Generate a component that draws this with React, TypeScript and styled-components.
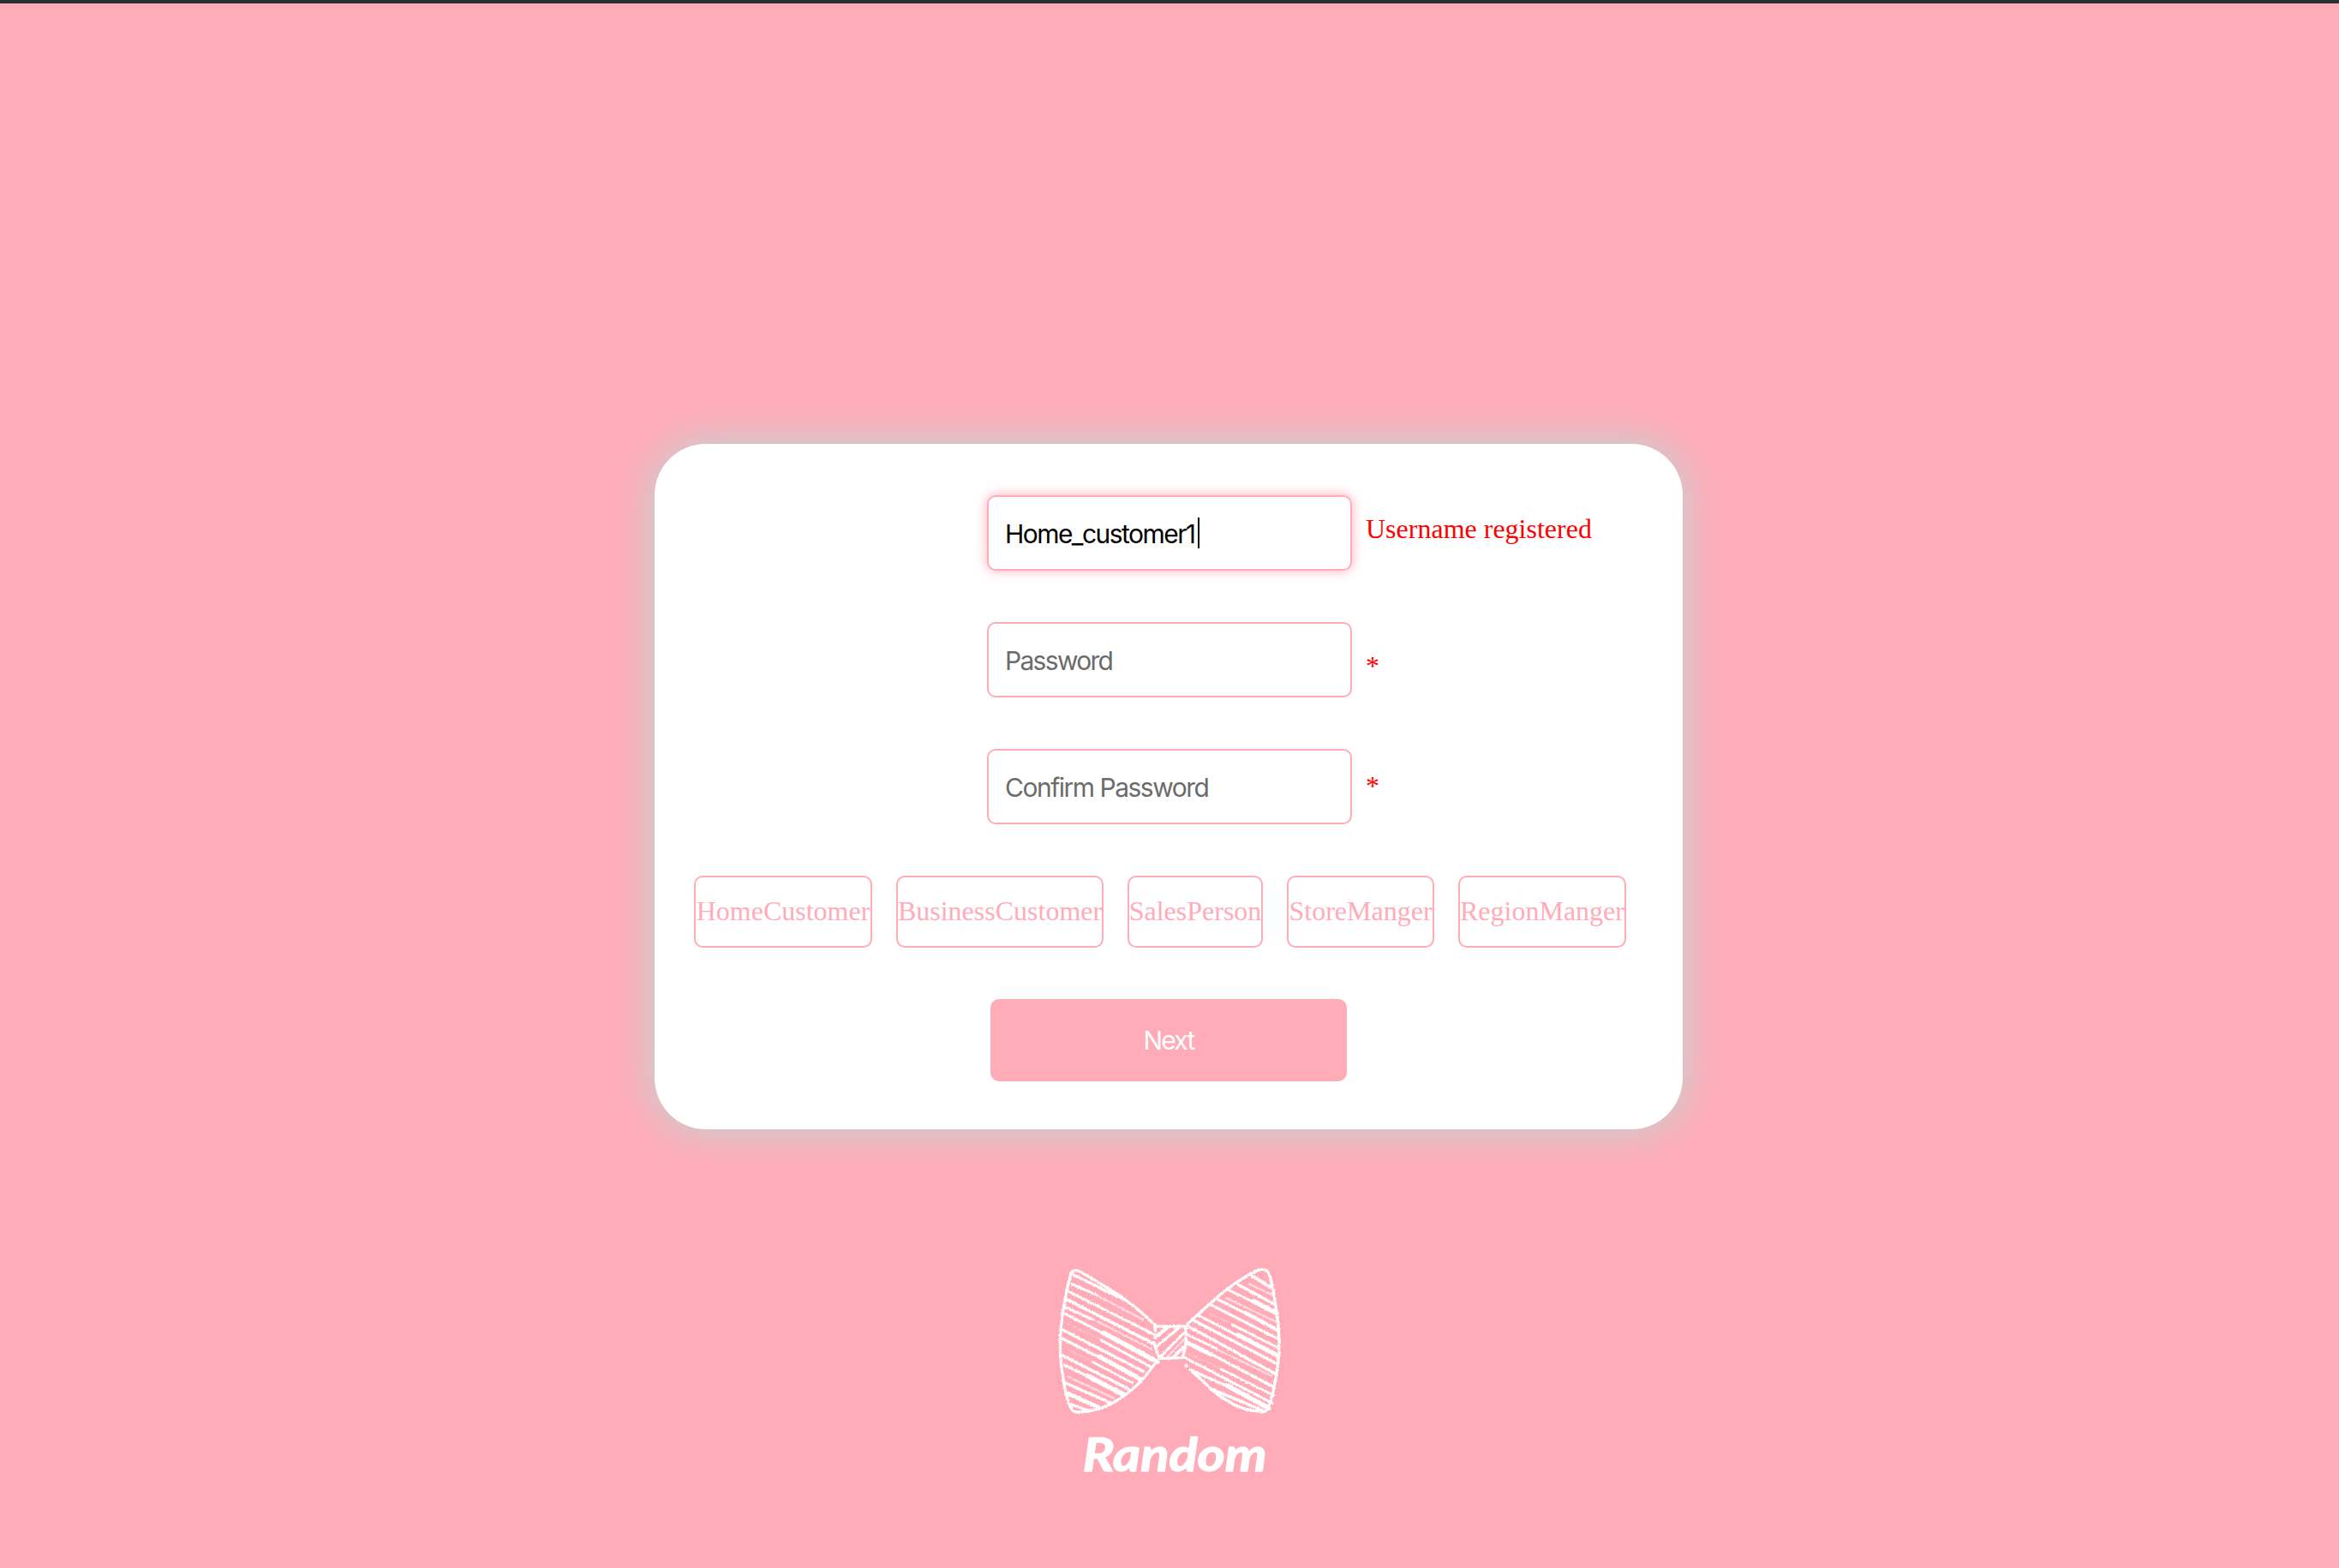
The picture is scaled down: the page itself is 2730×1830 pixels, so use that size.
import React from 'react';
import styled, { createGlobalStyle } from 'styled-components';

const PINK = '#ffacb8';
const SERIF = '"Liberation Serif", "Times New Roman", serif';
const SANS = 'Inter, "Liberation Sans", sans-serif';

const GlobalStyle = createGlobalStyle`
  * { box-sizing: border-box; }
  body { margin: 0; background: ${PINK}; overflow: hidden; }
`;

const Page = styled.div`
  height: 1830px;
  display: flex;
  flex-direction: column;
  align-items: center;
  background: ${PINK};
  font-family: ${SERIF};
  font-size: 32px;
`;

const TopEdge = styled.div`
  align-self: stretch;
  flex: none;
  height: 4px;
  background: #2b2e32;
`;

const Card = styled.form`
  width: 1200px;
  height: 800px;
  flex: none;
  margin: 514px 2px 0 0;
  padding-top: 60px;
  display: flex;
  flex-direction: column;
  gap: 60px;
  border-radius: 60px;
  background: #fff;
  box-shadow: 0 0 50px #b9d8d4;
`;

const FieldRow = styled.div`
  display: flex;
  align-items: flex-start;
  gap: 16px;
  height: 88px;
  padding-left: 388px;
`;

const Field = styled.div<{ $focused?: boolean; $spacing: number }>`
  width: 426px;
  height: 88px;
  flex: none;
  display: flex;
  align-items: center;
  padding: 2px 19px 0;
  border: 2px solid ${PINK};
  border-radius: 10px;
  font: 400 30px/36px ${SANS};
  letter-spacing: ${p => p.$spacing}px;
  color: ${p => (p.$focused ? '#000' : '#6b6b6b')};
  box-shadow: ${p => (p.$focused ? `0 0 14px ${PINK}` : 'none')};
`;

const Caret = styled.span`
  width: 2px;
  height: 36px;
  margin-left: 3px;
  margin-top: -2px;
  background: #000;
`;

const Hint = styled.span<{ $drop: number }>`
  padding-top: ${p => p.$drop}px;
  line-height: 36px;
  color: #f00;
`;

const Roles = styled.div`
  display: flex;
  gap: 28px;
  padding-left: 46px;
`;

const Role = styled.div<{ $width: number }>`
  width: ${p => p.$width}px;
  height: 84px;
  display: flex;
  align-items: center;
  justify-content: center;
  padding-bottom: 2px;
  border: 2px solid ${PINK};
  border-radius: 10px;
  color: ${PINK};
  white-space: nowrap;
`;

const Next = styled.button`
  width: 416px;
  height: 96px;
  margin-left: 392px;
  padding: 0 0 1px;
  border: 0;
  border-radius: 10px;
  background: ${PINK};
  color: #fff;
  font: 400 30px/36px ${SANS};
  letter-spacing: -1.8px;
`;

const Brand = styled.div`
  width: 320px;
  margin: 132px 0 0 -10px;
  display: flex;
`;

const roles = [
  { name: 'HomeCustomer', width: 208 },
  { name: 'BusinessCustomer', width: 242 },
  { name: 'SalesPerson', width: 158 },
  { name: 'StoreManger', width: 172 },
  { name: 'RegionManger', width: 196 },
];

// Hatching as [x1, y1, x2, y2, weight]; light weights are drawn as dry chalk.
type Stroke = [number, number, number, number, number];

const leftHatch: Stroke[] = [
  [152, 110, 345, 205, 10], [152, 145, 240, 185, 9], [240, 185, 402, 270, 5],
  [138, 170, 440, 322, 9], [132, 198, 440, 355, 11], [130, 226, 225, 270, 9],
  [225, 268, 435, 375, 5], [130, 250, 270, 322, 9], [265, 318, 452, 418, 17],
  [135, 285, 260, 342, 4], [255, 342, 430, 436, 9], [122, 307, 405, 452, 10],
  [120, 337, 255, 406, 10], [250, 400, 392, 478, 16], [138, 375, 230, 418, 4],
  [225, 418, 365, 492, 8], [122, 397, 350, 512, 10], [128, 430, 215, 472, 10],
  [210, 468, 332, 532, 17], [138, 470, 300, 545, 5], [132, 493, 285, 560, 10],
  [140, 530, 245, 577, 14], [150, 568, 208, 588, 10],
];

const rightHatch: Stroke[] = [
  [785, 118, 850, 158, 12], [775, 146, 858, 186, 5], [735, 148, 862, 216, 10],
  [705, 168, 795, 212, 9], [790, 206, 870, 248, 16], [695, 195, 872, 280, 5],
  [665, 200, 765, 250, 9], [760, 246, 875, 308, 13], [640, 218, 875, 338, 9],
  [635, 250, 720, 288, 4], [715, 288, 877, 370, 8], [598, 256, 740, 330, 9],
  [735, 324, 875, 397, 16], [580, 273, 872, 425, 10], [560, 293, 865, 460, 10],
  [555, 322, 660, 372, 8], [655, 372, 855, 468, 5], [555, 350, 640, 392, 15],
  [635, 388, 862, 508, 10], [560, 390, 680, 445, 4], [675, 444, 860, 535, 8],
  [548, 403, 855, 563, 9], [568, 446, 700, 505, 10], [695, 500, 842, 580, 17],
  [645, 515, 825, 590, 11],
];

const knotHatch: Stroke[] = [
  [445, 332, 488, 298, 13], [452, 362, 530, 298, 10], [465, 398, 545, 318, 9],
  [488, 400, 546, 340, 5], [510, 400, 546, 365, 11],
];

function Hatch({ strokes }: { strokes: Stroke[] }) {
  return (
    <>
      {strokes.map(([x1, y1, x2, y2, w], i) => (
        <line key={i} x1={x1} y1={y1} x2={x2} y2={y2} strokeWidth={w === 5 ? 7 : w}
          opacity={w < 6 ? (w === 5 ? 0.6 : 0.35) : 1}
          strokeDasharray={w < 6 ? '9 7 3 6' : undefined} />
      ))}
    </>
  );
}

function BowTie() {
  return (
    <svg width="320" height="290" viewBox="0 0 960 870">
      <defs>
        <filter id="chalk" x="-5%" y="-5%" width="110%" height="110%">
          <feTurbulence type="fractalNoise" baseFrequency="0.22" numOctaves="2" seed="4" />
          <feDisplacementMap in="SourceGraphic" scale="9" xChannelSelector="R" yChannelSelector="G" />
        </filter>
      </defs>
      <g stroke="#fff" fill="none" strokeLinecap="round" strokeLinejoin="round" filter="url(#chalk)">
        <Hatch strokes={leftHatch} />
        <Hatch strokes={rightHatch} />
        <Hatch strokes={knotHatch} />
        <g strokeWidth="10">
          <path d="M445 290C395 242 355 210 320 186C265 150 220 125 185 104Q160 90 150 108C115 240 100 360 122 468C130 530 142 570 155 586Q160 594 172 594C210 594 250 586 285 568C355 530 400 490 450 415" />
          <path d="M555 290C640 208 715 140 790 105C820 88 836 92 844 112C858 145 863 200 873 265C884 350 880 420 862 500C852 558 842 588 830 592C780 594 735 580 690 550C650 528 620 490 568 446" />
          <path d="M445 310L443 294L550 294Q560 350 540 404L460 406Q450 382 440 350" />
        </g>
        <circle cx="554" cy="432" r="4" fill="#fff" strokeWidth="4" />
      </g>
      <text x="191" y="801" fill="#fff" stroke="#fff" strokeWidth="4" strokeLinejoin="round"
        fontFamily="Lato, sans-serif" fontSize="158" fontWeight="700" fontStyle="italic"
        textLength="645" lengthAdjust="spacingAndGlyphs">Random</text>
    </svg>
  );
}

export default function App() {
  return (
    <>
      <GlobalStyle />
      <Page>
        <TopEdge />
        <Card>
          <FieldRow>
            <Field $focused $spacing={-1.55}>Home_customer1<Caret /></Field>
            <Hint $drop={21}>Username registered</Hint>
          </FieldRow>
          <FieldRow>
            <Field $spacing={-1.7}>Password</Field>
            <Hint $drop={33}>*</Hint>
          </FieldRow>
          <FieldRow>
            <Field $spacing={-1.5}>Confirm Password</Field>
            <Hint $drop={25}>*</Hint>
          </FieldRow>
          <Roles>
            {roles.map(r => <Role key={r.name} $width={r.width}>{r.name}</Role>)}
          </Roles>
          <Next type="button">Next</Next>
        </Card>
        <Brand><BowTie /></Brand>
      </Page>
    </>
  );
}
